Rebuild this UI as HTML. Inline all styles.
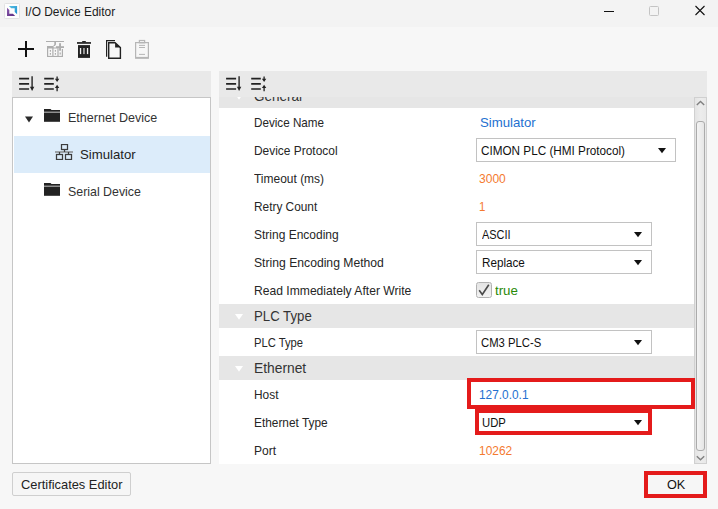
<!DOCTYPE html>
<html>
<head>
<meta charset="utf-8">
<title>I/O Device Editor</title>
<style>
html,body{margin:0;padding:0;}
body{width:718px;height:509px;overflow:hidden;background:#f7f7f7;position:relative;font-family:"Liberation Sans",sans-serif;font-size:13px;color:#1e1e1e;}
.abs{position:absolute;}
.t{position:absolute;white-space:nowrap;line-height:16px;height:16px;transform-origin:0 50%;}
#titlebar{left:0;top:0;width:718px;height:27px;background:#f3f3f3;}
.hdr{background:#e9e9e9;}
.grp{background:#e6e6e6;left:0;width:475px;height:24px;}
.combo{position:absolute;box-sizing:border-box;border:1px solid #c2c2c2;background:#fff;height:24px;}
.red{position:absolute;box-sizing:border-box;border:4px solid #e41b1b;}
.lbl{color:#262626;}
.blue{color:#2470d0;}
.orange{color:#f47a30;}
.green{color:#2a8a08;}
</style>
</head>
<body>
<!-- title bar -->
<div id="titlebar" class="abs"></div>
<svg class="abs" style="left:4px;top:3px" width="16" height="16" viewBox="0 0 16 16">
  <defs>
    <linearGradient id="lgb" x1="0" y1="0" x2="1" y2="1"><stop offset="0" stop-color="#58c0e2"/><stop offset="1" stop-color="#1e8fd0"/></linearGradient>
    <linearGradient id="lgp" x1="0" y1="0" x2="1" y2="1"><stop offset="0" stop-color="#8a5cae"/><stop offset="1" stop-color="#5b2a82"/></linearGradient>
  </defs>
  <rect x="0.500" y="0.500" width="15" height="15" rx="1" fill="#fdfdfd" stroke="#e2e2e2"/>
  <path d="M4.900 3 H13.100 V11.300 L10.700 8.900 V5.300 H7.200 Z" fill="url(#lgb)"/>
  <path d="M3 4.800 L5.300 7.100 V10.700 H8.900 L11.200 13 H3 Z" fill="url(#lgp)"/>
</svg>
<span class="t" id="title" style="left:24.6px;top:4.2px;font-size:12.5px;color:#1c1c1c;transform:scaleX(0.954);">I/O Device Editor</span>
<!-- window controls -->
<svg class="abs" style="left:600px;top:0" width="118" height="27" viewBox="0 0 118 27">
  <path d="M4 11.5 H14" stroke="#111" stroke-width="1" fill="none"/>
  <rect x="49.500" y="6.500" width="9" height="9" rx="1" fill="none" stroke="#c4c4c4" stroke-width="1"/>
  <path d="M95.500 6 L104.500 15 M104.500 6 L95.500 15" stroke="#111" stroke-width="1.100" fill="none"/>
</svg>

<!-- toolbar icons -->
<svg class="abs" style="left:12px;top:36px" width="150" height="26" viewBox="0 0 150 26">
  <!-- plus -->
  <path d="M6 13 H22 M14 5 V21" stroke="#111" stroke-width="2" fill="none"/>
  <!-- add device (disabled) -->
  <g fill="#adadad">
    <rect x="34" y="5" width="18" height="1"/>
    <path d="M42.300 6 H44 V8.500 L42.800 10 H41.200 L42.300 8.500 Z"/>
    <rect x="35" y="10" width="6.300" height="2.500"/>
    <rect x="35" y="10" width="1.200" height="11"/>
    <rect x="40.300" y="10" width="1.200" height="11"/>
    <rect x="45.400" y="12" width="1.200" height="9"/>
    <rect x="49.800" y="13" width="1.200" height="8"/>
    <rect x="35" y="19.900" width="16" height="1.100"/>
    <rect x="41" y="11.500" width="4.500" height="1"/>
    <rect x="44" y="10.200" width="8" height="1.800"/>
    <rect x="47.100" y="7.200" width="1.900" height="7.500"/>
    <rect x="37.800" y="14" width="1.200" height="1.700"/><rect x="37.800" y="17" width="1.200" height="1.700"/>
    <rect x="42.800" y="14" width="1.200" height="1.700"/><rect x="42.800" y="17" width="1.200" height="1.700"/>
    <rect x="47.600" y="16.500" width="1.200" height="2"/>
  </g>
  <!-- trash -->
  <g fill="#222">
    <rect x="70.200" y="5" width="3.600" height="1.400"/>
    <rect x="65" y="6.100" width="14" height="1.700"/>
    <rect x="66" y="9.100" width="12" height="12.800"/>
  </g>
  <rect x="67.900" y="12" width="1.300" height="6.100" fill="#f4f4f4"/><rect x="71.100" y="12" width="1.700" height="6.100" fill="#a8a8a8"/><rect x="74.900" y="12" width="1.300" height="6.100" fill="#f4f4f4"/>
  <!-- copy -->
  <path d="M103 4.600 H94.600 V20.700" stroke="#222" stroke-width="1.200" fill="none"/>
  <path d="M96.700 6.800 H103.100 L108.400 11.600 V22.300 H96.700 Z" stroke="#222" stroke-width="1.400" fill="none"/>
  <path d="M103.100 6.800 L108.400 11.600 H103.100 Z" fill="#222"/>
  <!-- paste (disabled) -->
  <g stroke="#b6b6b6" fill="none" stroke-width="1.200">
    <rect x="123.600" y="6.600" width="12.800" height="15.600"/>
    <path d="M123.600 21.600 H136.400" stroke-width="1.400"/>
    <rect x="127.400" y="4.500" width="5.200" height="2.300"/>
    <path d="M127 9.400 H133 M127 11.500 H133 M127 18.400 H133" stroke-width="1"/>
  </g>
</svg>

<!-- LEFT PANEL -->
<div class="abs hdr" style="left:12px;top:71px;width:199px;height:26px;"></div>
<svg class="abs" style="left:12px;top:71px" width="60" height="26" viewBox="0 0 60 26">
  <g stroke="#222" stroke-width="1.700" fill="none">
    <path d="M7.100 7.600 H17.100 M7.100 12.800 H17.100 M7.100 18 H17.100"/>
    <path d="M20.100 5.300 V18" stroke-width="1.400"/>
    <path d="M32.200 7.600 H41.800 M32.200 12.800 H41.800 M32.200 18 H41.800"/>
    <path d="M45.100 5.500 V9 M45.100 16.500 V20.300" stroke-width="1.300"/>
  </g>
  <path d="M17.900 15.800 H22.300 L20.100 20 Z" fill="#222"/>
  <path d="M42.900 7.800 H47.300 L45.100 10.900 Z M42.900 16.900 H47.300 L45.100 13.800 Z" fill="#222"/>
</svg>
<div class="abs" style="left:12px;top:97px;width:199px;height:367px;box-sizing:border-box;border:1px solid #c6c6c6;background:#fff;"></div>
<div class="abs" style="left:14px;top:136px;width:196px;height:37px;background:#dcecfa;"></div>
<!-- tree arrow -->
<svg class="abs" style="left:24px;top:114.700px" width="10" height="8" viewBox="0 0 10 8"><path d="M1 1.500 H9 L5 7.500 Z" fill="#2a2a2a"/></svg>
<!-- folder 1 -->
<svg class="abs" style="left:44px;top:109px" width="16" height="13" viewBox="0 0 16 13"><path d="M0 0 H6.500 L7.500 1 H16 V2.700 H0 Z" fill="#222"/><rect x="0" y="3.500" width="16" height="9.300" fill="#222"/></svg>
<span class="t" id="tr1" style="left:68.2px;top:109.8px;font-size:13.5px;color:#333;transform:scaleX(0.929);">Ethernet Device</span>
<!-- network icon -->
<svg class="abs" style="left:55px;top:144px" width="18" height="16" viewBox="0 0 18 16">
  <g fill="none" stroke="#3c3c3c" stroke-width="1.250">
    <rect x="6.500" y="0.500" width="6" height="5"/>
    <rect x="1.500" y="10.500" width="6" height="5"/>
    <rect x="10.500" y="10.500" width="6" height="5"/>
    <path d="M0 8 H18" stroke="#777"/>
    <path d="M9.500 5.500 V8 M4.500 8 V10.500 M13.500 8 V10.500"/>
  </g>
</svg>
<span class="t" id="tr2" style="left:79.6px;top:147.0px;font-size:13.5px;color:#222;transform:scaleX(0.977);">Simulator</span>
<!-- folder 2 -->
<svg class="abs" style="left:44px;top:183px" width="16" height="13" viewBox="0 0 16 13"><path d="M0 0 H6.500 L7.500 1 H16 V2.700 H0 Z" fill="#222"/><rect x="0" y="3.500" width="16" height="9.300" fill="#222"/></svg>
<span class="t" id="tr3" style="left:68.2px;top:183.8px;font-size:13.5px;color:#333;transform:scaleX(0.917);">Serial Device</span>

<!-- RIGHT PANEL -->
<div class="abs hdr" style="left:219px;top:71px;width:488px;height:26px;"></div>
<svg class="abs" style="left:219px;top:71px" width="60" height="26" viewBox="0 0 60 26">
  <g stroke="#222" stroke-width="1.700" fill="none">
    <path d="M7.100 7.600 H17.100 M7.100 12.800 H17.100 M7.100 18 H17.100"/>
    <path d="M20.100 5.300 V18" stroke-width="1.400"/>
    <path d="M32.200 7.600 H41.800 M32.200 12.800 H41.800 M32.200 18 H41.800"/>
    <path d="M45.100 5.500 V9 M45.100 16.500 V20.300" stroke-width="1.300"/>
  </g>
  <path d="M17.900 15.800 H22.300 L20.100 20 Z" fill="#222"/>
  <path d="M42.900 7.800 H47.300 L45.100 10.900 Z M42.900 16.900 H47.300 L45.100 13.800 Z" fill="#222"/>
</svg>
<div id="rp" class="abs" style="left:219px;top:97px;width:475px;height:367px;background:#fff;overflow:hidden;">
  <!-- coordinates inside are relative to (219,97) -->
  <div class="abs grp" style="top:-13px;"></div>
  <span class="t" style="left:34.7px;top:-10px;font-size:15px;color:#333;line-height:18px;height:18px;transform:scaleX(0.9);">General</span>
  <svg class="abs" style="left:16px;top:-3px" width="8" height="6" viewBox="0 0 8 6"><path d="M0 0 H8 L4 5.700 Z" fill="#fff"/></svg>

  <div class="abs grp" style="top:207px;"></div>
  <svg class="abs" style="left:16px;top:217px" width="8" height="6" viewBox="0 0 8 6"><path d="M0 0 H8 L4 5.700 Z" fill="#fff"/></svg>
  <span class="t" id="g2" style="left:34.7px;top:210px;font-size:15px;color:#333;line-height:18px;height:18px;transform:scaleX(0.880);">PLC Type</span>

  <div class="abs grp" style="top:259px;"></div>
  <svg class="abs" style="left:16px;top:269px" width="8" height="6" viewBox="0 0 8 6"><path d="M0 0 H8 L4 5.700 Z" fill="#fff"/></svg>
  <span class="t" id="g3" style="left:34.7px;top:262px;font-size:15px;color:#333;line-height:18px;height:18px;transform:scaleX(0.920);">Ethernet</span>

  <!-- labels: baseline = rowtop+19 ; with 16px line-height & 13px font baseline ~ top+12.500 -->
  <span class="t lbl" id="l1" style="left:34.7px;top:18.0px;transform:scaleX(0.897);">Device Name</span>
  <span class="t lbl" id="l2" style="left:34.7px;top:46.0px;transform:scaleX(0.918);">Device Protocol</span>
  <span class="t lbl" id="l3" style="left:35.3px;top:74.0px;transform:scaleX(0.921);">Timeout (ms)</span>
  <span class="t lbl" id="l4" style="left:34.7px;top:102.0px;transform:scaleX(0.912);">Retry Count</span>
  <span class="t lbl" id="l5" style="left:35.1px;top:130.0px;transform:scaleX(0.922);">String Encoding</span>
  <span class="t lbl" id="l6" style="left:35.1px;top:158.0px;transform:scaleX(0.936);">String Encoding Method</span>
  <span class="t lbl" id="l7" style="left:34.7px;top:186.0px;transform:scaleX(0.932);">Read Immediately After Write</span>
  <span class="t lbl" id="l8" style="left:34.7px;top:238.0px;transform:scaleX(0.862);">PLC Type</span>
  <span class="t lbl" id="l9" style="left:34.7px;top:290.0px;transform:scaleX(0.915);">Host</span>
  <span class="t lbl" id="l10" style="left:34.7px;top:318.0px;transform:scaleX(0.913);">Ethernet Type</span>
  <span class="t lbl" id="l11" style="left:34.7px;top:346.0px;transform:scaleX(0.926);">Port</span>

  <!-- values -->
  <span class="t blue" id="v1" style="left:260.6px;top:18.0px;transform:scaleX(1.015);">Simulator</span>
  <div class="combo" style="left:257px;top:41px;width:200px;"></div>
  <span class="t" id="v2" style="left:262.1px;top:46.0px;color:#111;transform:scaleX(0.902);">CIMON PLC (HMI Protocol)</span>
  <svg class="abs" style="left:438px;top:51px" width="10" height="6" viewBox="0 0 10 6"><path d="M1 0 H9 L5 5.300 Z" fill="#111"/></svg>
  <span class="t orange" id="v3" style="left:260.3px;top:74.0px;transform:scaleX(0.925);">3000</span>
  <span class="t orange" id="v4" style="left:259.8px;top:102.0px;transform:scaleX(0.883);">1</span>
  <div class="combo" style="left:257px;top:125px;width:176px;"></div>
  <span class="t" id="v5" style="left:263.0px;top:130.0px;color:#111;transform:scaleX(0.842);">ASCII</span>
  <svg class="abs" style="left:414px;top:135px" width="10" height="6" viewBox="0 0 10 6"><path d="M1 0 H9 L5 5.300 Z" fill="#111"/></svg>
  <div class="combo" style="left:257px;top:153px;width:176px;"></div>
  <span class="t" id="v6" style="left:262.9px;top:158.0px;color:#111;transform:scaleX(0.898);">Replace</span>
  <svg class="abs" style="left:414px;top:163px" width="10" height="6" viewBox="0 0 10 6"><path d="M1 0 H9 L5 5.300 Z" fill="#111"/></svg>
  <!-- checkbox -->
  <div class="abs" style="left:257px;top:185px;width:16px;height:16px;box-sizing:border-box;border:1px solid #b2b2b2;border-radius:2.5px;background:linear-gradient(#e4e4e4,#f2f2f2);"></div>
  <svg class="abs" style="left:257px;top:185px" width="16" height="16" viewBox="0 0 16 16"><path d="M3.200 8.300 L6.300 12.500 L12.800 2.800" stroke="#4a4a4a" stroke-width="1.600" fill="none"/></svg>
  <span class="t green" id="v7" style="left:276.4px;top:186.0px;transform:scaleX(1.023);">true</span>
  <div class="combo" style="left:257px;top:233px;width:176px;"></div>
  <span class="t" id="v8" style="left:262.1px;top:238.0px;color:#111;transform:scaleX(0.868);">CM3 PLC-S</span>
  <svg class="abs" style="left:414px;top:243px" width="10" height="6" viewBox="0 0 10 6"><path d="M1 0 H9 L5 5.300 Z" fill="#111"/></svg>
  <span class="t blue" id="v9" style="left:260.0px;top:290.0px;transform:scaleX(0.913);">127.0.0.1</span>
  <div class="combo" style="left:257px;top:313px;width:176px;"></div>
  <span class="t" id="v10" style="left:262.8px;top:318.0px;color:#111;transform:scaleX(0.869);">UDP</span>
  <svg class="abs" style="left:414px;top:323px" width="10" height="6" viewBox="0 0 10 6"><path d="M1 0 H9 L5 5.300 Z" fill="#111"/></svg>
  <span class="t orange" id="v11" style="left:259.8px;top:346.0px;transform:scaleX(0.917);">10262</span>
</div>
<!-- scrollbar -->
<div class="abs" style="left:694px;top:97px;width:13px;height:367px;box-sizing:border-box;border:1px solid #d0d0d0;background:linear-gradient(90deg,#e4e4e4,#ececec 50%,#e8e8e8);"></div>
<div class="abs" style="left:696px;top:121px;width:9px;height:330px;box-sizing:border-box;border:1px solid #ababab;border-radius:3px;background:linear-gradient(90deg,#f4f4f4,#e6e6e6);"></div>
<svg class="abs" style="left:694px;top:97px" width="13" height="367" viewBox="0 0 13 367">
  <path d="M2.800 8 L6.500 4.500 L10.200 8" stroke="#808080" stroke-width="1.400" fill="none"/>
  <path d="M2.800 359.300 L6.500 362.800 L10.200 359.300" stroke="#808080" stroke-width="1.400" fill="none"/>
</svg>

<!-- red highlight boxes -->
<div class="red" style="left:467px;top:378px;width:228px;height:31px;"></div>
<div class="red" style="left:475px;top:409px;width:177px;height:26px;"></div>

<!-- bottom buttons -->
<div class="abs" style="left:12px;top:472px;width:119px;height:24px;box-sizing:border-box;border:1px solid #cfcfcf;background:#f6f6f6;border-radius:2px;"></div>
<span class="t" id="b1" style="left:20.6px;top:477.0px;font-size:13.500px;color:#222;transform:scaleX(0.952);">Certificates Editor</span>
<div class="abs" style="left:645px;top:472px;width:61px;height:24px;box-sizing:border-box;border:1px solid #cfcfcf;background:#f6f6f6;"></div>
<div class="red" style="left:644px;top:471px;width:63px;height:27px;"></div>
<span class="t" id="b2" style="left:667.3px;top:477.0px;font-size:13.500px;color:#111;transform:scaleX(0.939);">OK</span>
</body>
</html>
